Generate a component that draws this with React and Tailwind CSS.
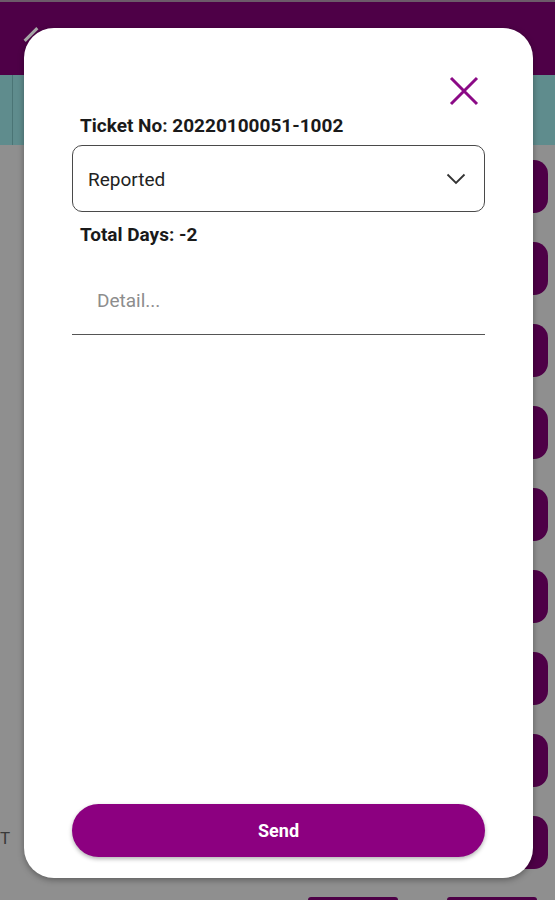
import React from "react";

function Pill() {
  return <div className="h-[53px] w-[48px] rounded-r-[14px] bg-[#4e0047]" />;
}

export default function App() {
  return (
    <div className="relative h-[900px] w-[555px] overflow-hidden bg-[#8f8f8f] font-['Roboto',sans-serif]">
      {/* background page */}
      <div className="flex h-full flex-col">
        <div className="h-[2px] bg-[#6c5a69]" />
        <div className="h-[73px] bg-[#4e0047]" />
        <div className="flex h-[70px] bg-[#5f8c8d]">
          <div className="ml-[12px] w-[1px] bg-[#4a7475]" />
        </div>
        <div className="flex flex-1 flex-col">
          <div className="flex flex-1">
            <div className="flex flex-1 flex-col justify-end pb-[50px]">
              <span className="text-[17px] leading-none text-[#3a3a3a]">T</span>
            </div>
            <div className="mt-[15px] mr-[7px] flex flex-col gap-[29px]">
              {Array.from({ length: 9 }).map((_, i) => (
                <Pill key={i} />
              ))}
            </div>
          </div>
          <div className="flex h-[3px] gap-[49px] pl-[308px]">
            <div className="w-[90px] rounded-t-[4px] bg-[#4e0047]" />
            <div className="w-[90px] rounded-t-[4px] bg-[#4e0047]" />
          </div>
        </div>
      </div>

      {/* back arrow remnant */}
      <div className="absolute left-[22px] top-[33px] h-[3px] w-[18px] -rotate-45 bg-[#a9a9a9]" />

      {/* modal */}
      <div className="absolute left-[24px] top-[28px] flex h-[850px] w-[509px] flex-col rounded-[30px] bg-white px-[48px] shadow-[0_2px_6px_rgba(0,0,0,0.35)]">
        <div className="flex justify-end pt-[48px] pr-[6px]">
          <svg width="30" height="30" viewBox="0 0 30 30" className="text-[#8b0a86]">
            <path d="M2 2 L28 28 M28 2 L2 28" stroke="currentColor" strokeWidth="3" strokeLinecap="butt" />
          </svg>
        </div>
        <div className="mt-[7px] pl-[8px] text-[19px] font-bold leading-[26px] text-[#1a1a1a]">
          Ticket No: 20220100051-1002
        </div>
        <div className="mt-[6px] flex h-[67px] items-center justify-between rounded-[10px] border border-[#4a4a4a] pl-[15px] pr-[18px]">
          <span className="pt-[3px] text-[19px] text-[#222]">Reported</span>
          <svg width="20" height="12" viewBox="0 0 20 12">
            <path d="M1.5 1.5 L10 10 L18.5 1.5" fill="none" stroke="#333" strokeWidth="1.8" />
          </svg>
        </div>
        <div className="mt-[10px] pl-[8px] text-[19px] font-bold leading-[26px] text-[#1a1a1a]">
          Total Days: -2
        </div>
        <div className="mt-[37px] flex h-[50px] items-start border-b-[1.5px] border-[#555] pl-[25px] pt-[3px]">
          <span className="text-[19px] leading-[26px] text-[#8d8d8d]">Detail...</span>
        </div>
        <div className="flex-1" />
        <button className="mb-[21px] h-[53px] w-full rounded-full bg-[#8c0080] text-[18px] font-bold text-white shadow-[0_2px_4px_rgba(0,0,0,0.3)]">
          Send
        </button>
      </div>
    </div>
  );
}
